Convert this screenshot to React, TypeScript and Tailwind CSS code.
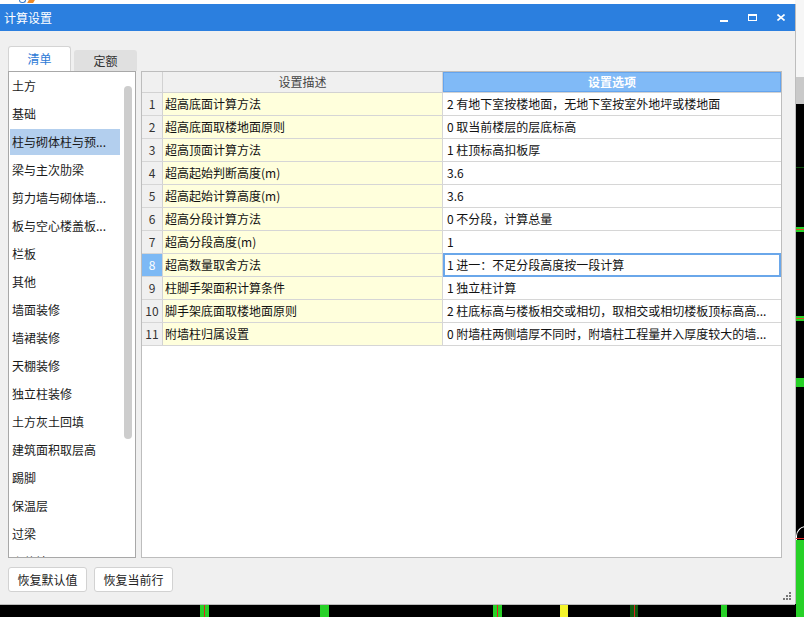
import React from 'react';

const listItems = [
  '土方',
  '基础',
  '柱与砌体柱与预...',
  '梁与主次肋梁',
  '剪力墙与砌体墙...',
  '板与空心楼盖板...',
  '栏板',
  '其他',
  '墙面装修',
  '墙裙装修',
  '天棚装修',
  '独立柱装修',
  '土方灰土回填',
  '建筑面积取层高',
  '踢脚',
  '保温层',
  '过梁',
  '砌体墙',
];

const rows = [
  ['超高底面计算方法', '2 有地下室按楼地面，无地下室按室外地坪或楼地面'],
  ['超高底面取楼地面原则', '0 取当前楼层的层底标高'],
  ['超高顶面计算方法', '1 柱顶标高扣板厚'],
  ['超高起始判断高度(m)', '3.6'],
  ['超高起始计算高度(m)', '3.6'],
  ['超高分段计算方法', '0 不分段，计算总量'],
  ['超高分段高度(m)', '1'],
  ['超高数量取舍方法', '1 进一：不足分段高度按一段计算'],
  ['柱脚手架面积计算条件', '1 独立柱计算'],
  ['脚手架底面取楼地面原则', '2 柱底标高与楼板相交或相切，取相交或相切楼板顶标高高...'],
  ['附墙柱归属设置', '0 附墙柱两侧墙厚不同时，附墙柱工程量并入厚度较大的墙...'],
];

// coloured bars of the drawing canvas peeking out under the dialog
const bottomBars = [
  { x: 'left-[200px] w-[9px]', color: 'bg-[#27d127]', red: true },
  { x: 'left-[320px] w-[9px]', color: 'bg-[#27d127]', red: false },
  { x: 'left-[493px] w-[9px]', color: 'bg-[#27d127]', red: true },
  { x: 'left-[560px] w-[8px]', color: 'bg-[#f4f42c]', red: false },
  { x: 'left-[630px] w-[8px]', color: 'bg-[#0f5a0f]', red: true },
  { x: 'left-[721px] w-[6px]', color: 'bg-[#27d127]', red: false },
];

function ListPanel() {
  return (
    <div className="w-[128px] h-full border border-[#a8a8a8] bg-white flex overflow-hidden">
      <div className="flex-1 flex flex-col pt-[1px] pl-[1px] overflow-hidden">
        {listItems.map((item, idx) => (
          <div key={item} className="h-[28px] shrink-0">
            <div
              className={`h-[26px] w-[110px] flex items-center pl-[2px] whitespace-nowrap ${
                idx === 2 ? 'bg-[#b3cfee]' : ''
              }`}
            >
              {item}
            </div>
          </div>
        ))}
      </div>
      {/* scrollbar */}
      <div className="w-[14px] shrink-0 pt-[14px] flex justify-center">
        <div className="w-[8px] h-[353px] rounded-full bg-[#cdcdcd]" />
      </div>
    </div>
  );
}

function SettingsTable() {
  return (
    <div className="ml-[5px] w-[641px] h-full border border-[#bdbdbd] bg-white flex flex-col">
      <div className="h-[21px] flex border-b border-[#d2d2d2] shrink-0">
        <div className="w-[21px] border-r border-[#d2d2d2] bg-[#f0f0f0]" />
        <div className="w-[280px] border-r border-[#d2d2d2] bg-[#f0f0f0] flex items-center justify-center text-[#444]">
          设置描述
        </div>
        <div className="flex-1 bg-[#80baf7] border border-[#64a4ee] flex items-center justify-center text-white font-bold">
          设置选项
        </div>
      </div>
      {rows.map(([desc, option], idx) => {
        const selected = idx === 7;
        return (
          <div key={desc} className="h-[23px] flex border-b border-[#d6d6d6] shrink-0">
            <div
              className={`w-[21px] border-r border-[#d2d2d2] flex items-center justify-center ${
                selected ? 'bg-[#7db9f5] text-white' : 'bg-[#f0f0f0] text-[#333]'
              }`}
            >
              {idx + 1}
            </div>
            <div className="w-[280px] border-r border-[#d6d6d6] bg-[#ffffdc] flex items-center pl-[2px] text-[#111]">
              {desc}
            </div>
            <div
              className={`flex-1 flex items-center whitespace-nowrap overflow-hidden text-[#111] ${
                selected ? 'border-2 border-[#6aa7ea] pl-[2px] -mt-[1px] h-[24px]' : 'pl-[4px]'
              }`}
            >
              {option}
            </div>
          </div>
        );
      })}
    </div>
  );
}

export default function App() {
  return (
    <div className="relative w-[804px] h-[617px] overflow-hidden bg-black font-['Noto_Sans_CJK_SC',sans-serif] text-[12px]">
      {/* desktop behind the dialog */}
      <div className="absolute left-0 top-0 w-full h-[4px] bg-white" />
      <div className="absolute left-[19px] top-0 w-[7px] h-[3px] rounded-b-full border border-t-0 border-[#3c7fd0]" />
      <div className="absolute left-[28px] top-0 w-[6px] h-[3px] bg-[#f08a24] skew-x-[-30deg]" />
      <div className="absolute left-[795px] top-0 w-[9px] h-[77px] bg-[#f6f6f6]" />
      <div className="absolute left-[795px] top-[77px] w-[9px] h-[27px] bg-[#c9c9c9]" />
      <div className="absolute left-[795px] top-[167px] w-[9px] h-[1px] bg-[#0d4d0d]" />
      <div className="absolute left-[795px] top-[227px] w-[9px] h-[5px] bg-[#27d127] border-y border-[#27d127] flex items-center">
        <div className="w-full h-[1px] bg-[#d9541d]" />
      </div>
      <div className="absolute left-[795px] top-[316px] w-[9px] h-[5px] bg-[#27d127] flex items-center">
        <div className="w-full h-[1px] bg-[#d9541d]" />
      </div>
      <div className="absolute left-[795px] top-[378px] w-[9px] h-[9px] bg-[#27d127]" />
      <div className="absolute left-[796px] top-[526px] w-[10px] h-[14px] rounded-tl-full border-l border-t border-white" />
      <div className="absolute left-[795px] top-[538px] w-[9px] h-[1px] bg-[#e02020]" />
      <div className="absolute left-[796px] top-[540px] w-[8px] h-[77px] bg-[#27d127]" />
      {bottomBars.map((bar) => (
        <div key={bar.x} className={`absolute top-[604px] h-[13px] flex justify-center ${bar.x} ${bar.color}`}>
          {bar.red && <div className="w-[1px] h-full bg-[#e02020]" />}
        </div>
      ))}

      {/* dialog window */}
      <div className="absolute left-0 top-[4px] w-[795px] h-[600px] bg-[#f0f0f0] flex flex-col shadow-[1px_0_0_#bdbdbd,0_1px_0_#bdbdbd]">
        <div className="h-[27px] bg-[#2b7fdf] flex items-center pl-[4px] text-white text-[12px] shrink-0">
          <span>计算设置</span>
          <div className="ml-auto flex items-center pr-[10px]">
            <svg width="8" height="8" viewBox="0 0 8 8" className="mt-[2px]">
              <rect x="0" y="5" width="8" height="2" fill="white" />
            </svg>
            <svg width="9" height="7" viewBox="0 0 9 7" className="ml-[20px]">
              <rect x="0.5" y="0.5" width="8" height="6" fill="none" stroke="white" />
              <rect x="0" y="0" width="9" height="2" fill="white" />
            </svg>
            <svg width="8" height="7" viewBox="0 0 8 7" className="ml-[20px]">
              <path d="M0.5 0.5 L7.5 6.5 M7.5 0.5 L0.5 6.5" stroke="white" strokeWidth="1.6" />
            </svg>
          </div>
        </div>

        <div className="flex-1 flex flex-col px-[8px] pt-[15px] text-[#1a1a1a]">
          {/* tabs */}
          <div className="h-[25px] flex items-end shrink-0">
            <div className="w-[63px] h-[25px] bg-white border border-b-0 border-[#d4d4d4] rounded-t-[3px] flex items-center justify-center text-[#2d7ad6]">
              清单
            </div>
            <div className="ml-[3px] w-[63px] h-[21px] bg-[#e0e0e0] rounded-t-[3px] flex items-center justify-center text-[#333]">
              定额
            </div>
          </div>

          <div className="h-[487px] flex shrink-0">
            <ListPanel />
            <SettingsTable />
          </div>

          <div className="mt-[9px] flex gap-[7px]">
            <button className="w-[79px] h-[25px] bg-white border border-[#d2d2d2] rounded-[3px] text-[#222]">
              恢复默认值
            </button>
            <button className="w-[79px] h-[25px] bg-white border border-[#d2d2d2] rounded-[3px] text-[#222]">
              恢复当前行
            </button>
          </div>
        </div>

        {/* resize grip */}
        <svg width="8" height="8" viewBox="0 0 8 8" className="absolute right-[4px] bottom-[4px]">
          <rect x="6" y="0" width="2" height="2" fill="#777" />
          <rect x="3" y="3" width="2" height="2" fill="#777" />
          <rect x="6" y="3" width="2" height="2" fill="#777" />
          <rect x="0" y="6" width="2" height="2" fill="#777" />
          <rect x="3" y="6" width="2" height="2" fill="#777" />
          <rect x="6" y="6" width="2" height="2" fill="#777" />
        </svg>
      </div>
    </div>
  );
}
